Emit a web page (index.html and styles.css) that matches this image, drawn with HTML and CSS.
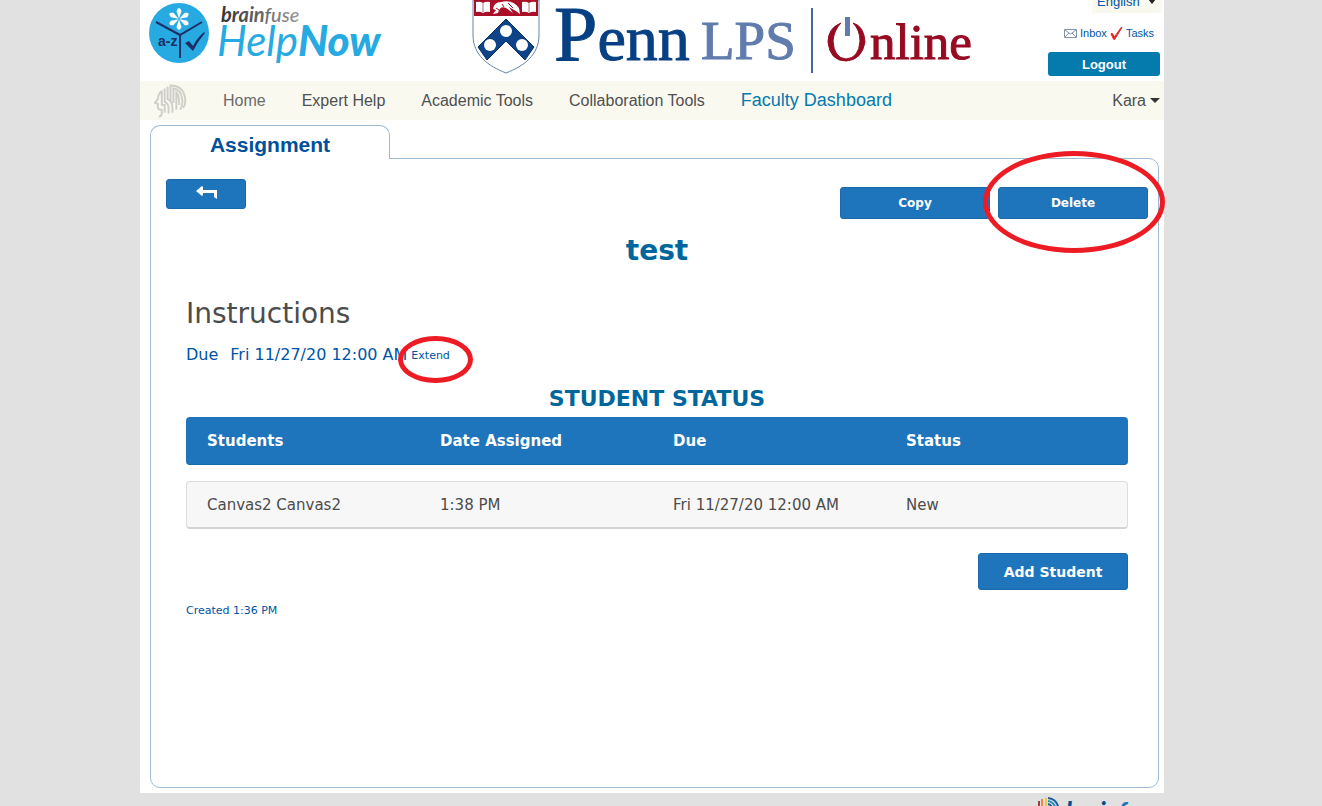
FILE: index.html
```html
<!DOCTYPE html>
<html lang="en">
<head>
<meta charset="utf-8">
<title>Assignment</title>
<link rel="stylesheet" href="styles.css">
</head>
<body>
<div class="page">
  <header class="header">
    <svg class="helpnow" width="250" height="81" viewBox="0 0 250 81" role="img" aria-label="Brainfuse HelpNow">
      <defs><linearGradient id="grey"><stop offset="0" stop-color="#333"/><stop offset="1" stop-color="#999"/></linearGradient></defs>
      <circle cx="39" cy="33" r="30" fill="#27aae1"/>
      <g fill="#fff">
        <path id="petal" d="M39 18.500 L36.500 11 Q39 5 41.500 11Z"/>
        <use href="#petal" transform="rotate(60 39 19)"/><use href="#petal" transform="rotate(120 39 19)"/><use href="#petal" transform="rotate(180 39 19)"/><use href="#petal" transform="rotate(240 39 19)"/><use href="#petal" transform="rotate(300 39 19)"/>
      </g>
      <path d="M16 22 L40 35 L62 22 M40 35 V58" fill="none" stroke="#1d2f66" stroke-width="2"/>
      <text class="az" x="18" y="46">a-z</text>
      <path d="M45 43 L49 41 L53 46 Q57 38 64 32 L65 33 Q58 41 53 51Z" fill="#1d2f66"/>
      <text class="brand-small" x="81" y="22" fill="url(#grey)"><tspan class="heavy">brain</tspan>fuse</text>
      <text class="brand-large" x="77" y="56">Help<tspan class="heavy">Now</tspan></text>
    </svg>
    <svg class="penn" width="510" height="81" viewBox="0 0 510 81" role="img" aria-label="Penn LPS Online">
      <path d="M8 0 H74 V35 C74 55 59 66 41 73 C23 66 8 55 8 35Z" fill="#fff" stroke="#6286a8" stroke-width="1"/>
      <path d="M9 0 H73 V16 H9Z" fill="#a90f27"/>
      <path d="M11 2 Q15 1 18 3 Q21 1 25 2 V12 Q21 11 18 13 Q15 11 11 12Z M57 2 Q61 1 64 3 Q67 1 71 2 V12 Q67 11 64 13 Q61 11 57 12Z" fill="#fff"/>
      <path d="M18 3 V12 M64 3 V12" stroke="#b67680" stroke-width="1"/>
      <path d="M28 9 Q29 2 36 2 Q47 -1 54 8 L55 14 L51 11 Q47 9 44 7 L48 13 L41 8 Q35 5 33 13 L28 14 L31 10Z" fill="#fff"/>
      <path d="M31 8 l3 2 M37 4 l2 3 M43 3 l5 5" stroke="#a90f27" fill="none"/>
      <path d="M41 19 L69 47 L60 60 L41 41 L22 60 L13 47Z" fill="#0d4489" stroke="#0a2f62"/>
      <g fill="#fff"><circle cx="41" cy="31" r="6"/><circle cx="25" cy="45" r="6"/><circle cx="57" cy="45" r="6"/></g>
      <text class="penn-name" x="89" y="60"><tspan class="penn-cap">P</tspan>enn</text>
      <text class="penn-lps" x="236" y="59">LPS</text>
      <path d="M347 8 V73" stroke="#47669b" stroke-width="2"/>
      <path d="M376 23 Q363 28 363 42 Q365 61 381 61 Q397 60 400 42 Q399 26 388 23 Q395 30 395 41 Q394 58 381 59 Q369 58 368 41 Q369 30 376 23Z" fill="#960b22" stroke="#960b22"/>
      <path d="M380 17 h5 v19 h-5Z" fill="#607cad"/>
      <text class="penn-online" x="405" y="59">nline</text>
    </svg>
    <div class="account">
      <label class="language"><select aria-label="Language"><option>English</option></select><svg width="8" height="5" viewBox="0 0 8 5"><path d="M0 0H8L4 5Z" fill="#222"/></svg></label>
      <div class="links">
        <svg width="13" height="9" viewBox="0 0 13 9"><path d="M.5 .5H12.5V8.5H.5Z M1 1L6.5 5L12 1 M1 8L5 4 M12 8L8 4" fill="#fff" stroke="#8794aa"/></svg>
        <a href="#">Inbox</a>
        <svg width="13" height="14" viewBox="0 0 14 14"><path d="M1 8 L2 7 L5 11 L12 1 L13 1 L5 14 H4Z" fill="#e3262b" stroke="#e3262b"/></svg>
        <a href="#">Tasks</a>
      </div>
      <button class="logout">Logout</button>
    </div>
  </header>
  <nav class="nav">
    <svg class="head" width="33" height="36" viewBox="0 0 34 36" fill="none" stroke="#cfcfca" stroke-width="2">
      <path d="M7 8 Q4 12 4 16 L1 20 L4 21 V25 Q4 27 8 27 V31 Q8 34 5 34 M8 7 V22 H11 V30 M11 5 V19 Q15 20 15 26 V31 M14 3 V16 Q19 18 19 25 V30 M17 18 V2 Q30 2 32 15 Q33 22 30 25 M20 20 V5 Q28 6 29 16 Q30 22 27 27 M23 27 V9 Q26 12 26 22"/>
    </svg>
    <a href="#" class="home">Home</a>
    <a href="#">Expert Help</a>
    <a href="#">Academic Tools</a>
    <a href="#">Collaboration Tools</a>
    <a href="#" class="current">Faculty Dashboard</a>
    <button class="user">Kara<svg width="10" height="5" viewBox="0 0 10 5"><path d="M0 0H10L5 5Z" fill="#333"/></svg></button>
  </nav>
  <main class="main">
    <h1 class="tab">Assignment</h1>
    <section class="panel">
      <div class="toolbar">
        <button class="button back" aria-label="Back"><svg width="21" height="14" viewBox="0 0 21 14"><path d="M0 5 L6 0 L7 1 V4 H21 V13 L18 11 V7 H7 V9 L6 10Z" fill="#fff"/></svg></button>
        <div class="actions">
          <button class="button action">Copy</button>
          <span class="marked"><button class="button action">Delete</button><span class="ring ring-large"></span></span>
        </div>
      </div>
      <div class="content">
        <h2 class="title">test</h2>
        <h3 class="subtitle">Instructions</h3>
        <p class="due"><span class="due-label">Due</span><span>Fri 11/27/20 12:00 AM</span><span class="marked"><a href="#" class="extend">Extend</a><span class="ring ring-small"></span></span></p>
        <h3 class="status-title">STUDENT STATUS</h3>
        <table class="students">
          <thead><tr><th>Students</th><th>Date Assigned</th><th>Due</th><th>Status</th></tr></thead>
          <tbody><tr><td>Canvas2 Canvas2</td><td>1:38 PM</td><td>Fri 11/27/20 12:00 AM</td><td>New</td></tr></tbody>
        </table>
        <button class="button add">Add Student</button>
        <p class="created">Created 1:36 PM</p>
      </div>
    </section>
  </main>
  <footer class="footer">
    <svg width="130" height="36" viewBox="0 0 130 36" role="img" aria-label="brainfuse">
      <g fill="none" stroke-width="2"><path d="M5 8 V22" stroke="#9c3c32"/><path d="M8 6 V22" stroke="#e98a35"/><path d="M12 5 V22" stroke="#f2c34d"/><path d="M14 5 Q24 6 25 18" stroke="#1a609b"/><path d="M14 8 Q21 9 22 18" stroke="#2494c8"/><path d="M14 11 Q18 12 19 18" stroke="#1a609b"/></g>
      <text class="footer-brand" x="32" y="27">brain<tspan class="footer-fuse">fuse</tspan></text>
    </svg>
  </footer>
</div>
</body>
</html>
```
FILE: styles.css
```css
* { box-sizing: border-box; }
body {
  margin: 0;
  padding-right: 18px;
  height: 100vh;
  overflow: hidden;
  background: #e1e1e1;
  color: #4c4c4c;
  font-family: "DejaVu Sans", sans-serif;
  font-size: 15px;
}
a { color: #0054a4; text-decoration: none; }
button { border: 0; font-family: inherit; cursor: pointer; }
h1, h2, h3, p { margin: 0; }
.page { display: flex; flex-direction: column; max-width: 1024px; height: 100%; margin: 0 auto; }

.header {
  display: flex;
  flex-shrink: 0;
  height: 81px;
  overflow: hidden;
  background: #fff;
  font-family: "Liberation Sans", Arial, sans-serif;
}
.penn { margin-left: 75px; }
.az { font: bold 14px "Liberation Sans", sans-serif; fill: #1d2f66; }
.brand-small { font: italic 500 20px Lato, sans-serif; }
.brand-large { font: italic 400 42px Lato, sans-serif; fill: #27aae1; }
.brand-small .heavy { font-weight: 700; }
.heavy { font-weight: 900; }
.penn-name, .penn-lps, .penn-online { font-family: "Liberation Serif", serif; }
.penn-name { font-size: 64px; fill: #064083; stroke: #064083; }
.penn-cap { font-size: 78px; }
.penn-lps { font-size: 55px; fill: #607cad; stroke: #607cad; }
.penn-online { font-size: 51px; fill: #960b22; stroke: #960b22; }

.account { display: flex; flex-direction: column; justify-content: flex-end; align-items: flex-end; margin-left: auto; padding: 0 4px 5px 0; }
.account > * { flex-shrink: 0; }
.language { display: flex; align-items: center; gap: 8px; height: 24px; margin-right: -2px; padding: 0 6px 0 5px; background: #f9f9f0; }
.language select { appearance: none; border: 0; padding: 0; background: none; color: #0054a4; font: 13px "Liberation Sans", sans-serif; }
.links { display: flex; align-items: center; gap: 3px; margin: 13px 6px 12px 0; height: 14px; font-size: 11px; }
.logout { width: 112px; height: 24px; border-radius: 3px; background: #047aad; color: #fff; font-size: 13px; font-weight: bold; }

.nav {
  display: flex;
  flex-shrink: 0;
  align-items: center;
  gap: 36px;
  height: 39px;
  padding: 0 4px 0 14px;
  background: #f9f9f0;
  font-family: "Liberation Sans", Arial, sans-serif;
  font-size: 16px;
}
.nav a { color: #505050; }
.nav .home { color: #6b6b6b; }
.nav .current { color: #047aad; font-size: 18px; }
.user { display: flex; align-items: center; gap: 4px; margin-left: auto; padding: 0; background: none; color: #505050; font-size: 16px; }

.main { display: flex; flex: 1; flex-direction: column; padding: 5px 5px 5px 10px; background: #fff; }
.tab {
  z-index: 1;
  width: 240px;
  height: 34px;
  margin-bottom: -1px;
  border: 1px solid #9ebbd3;
  border-bottom: 0;
  border-radius: 10px 10px 0 0;
  background: #fff;
  color: #00509b;
  font: bold 21px/38px "Liberation Sans", Arial, sans-serif;
  text-align: center;
}
.panel { flex: 1; border: 1px solid #9ebbd3; border-radius: 0 10px 10px 10px; }
.toolbar { display: flex; justify-content: space-between; align-items: flex-start; padding: 20px 10px 0 15px; }
.button { border: 1px solid #1b68ad; border-radius: 3px; padding: 0; background: #1e75bc; color: #fff; font-weight: bold; }
.back { width: 80px; height: 30px; }
.actions { display: flex; gap: 8px; margin-top: 8px; }
.action { width: 150px; height: 32px; font-size: 12px; }
.marked { position: relative; }
.ring { position: absolute; border: 5px solid #ed1c24; border-radius: 50%; pointer-events: none; }
.ring-large { inset: -36px -17px -34px -15px; }
.ring-small { inset: -10px -23px -19px -13px; }

.content { display: flex; flex-direction: column; padding: 13px 30px 0 35px; }
.title { color: #00669c; font-size: 28px; line-height: 38px; text-align: center; }
.subtitle { margin-top: 24px; font-size: 28px; font-weight: normal; line-height: 40px; }
.due { display: flex; align-items: center; margin-top: 11px; color: #0054a4; font-size: 16px; line-height: 20px; }
.due-label { margin-right: 12px; }
.due .marked { margin-left: 4px; line-height: 16px; }
.extend { font-size: 11px; }
.status-title { margin-top: 20px; color: #00669c; font-size: 22px; line-height: 28px; text-align: center; }
.students { width: 100%; margin: -12px 0 8px; border-collapse: separate; border-spacing: 0 16px; table-layout: fixed; }
.students th, .students td { height: 48px; padding: 0 0 0 21px; text-align: left; }
.students th { border-bottom: 1px solid #1b68ad; background: #1e75bc; color: #fff; }
.students th:not(:last-child) { width: 233px; }
.students td { border-top: 1px solid #ddd; border-bottom: 2px solid #d3d3d3; background: #f7f7f7; }
.students td:first-child { padding-left: 20px; border-left: 1px solid #ddd; }
.students td:last-child { border-right: 1px solid #ddd; }
.students tr > :first-child { border-radius: 4px 0 0 4px; }
.students tr > :last-child { border-radius: 0 4px 4px 0; }
.add { align-self: flex-end; width: 150px; height: 37px; font-size: 14px; }
.created { margin-top: 13px; color: #0054a4; font-size: 11px; line-height: 16px; }

.footer { flex-shrink: 0; align-self: flex-end; height: 13px; overflow: hidden; }
.footer-brand { font: italic 900 24px Lato, sans-serif; fill: #00508f; }
.footer-fuse { fill: #1e75bc; }
```
